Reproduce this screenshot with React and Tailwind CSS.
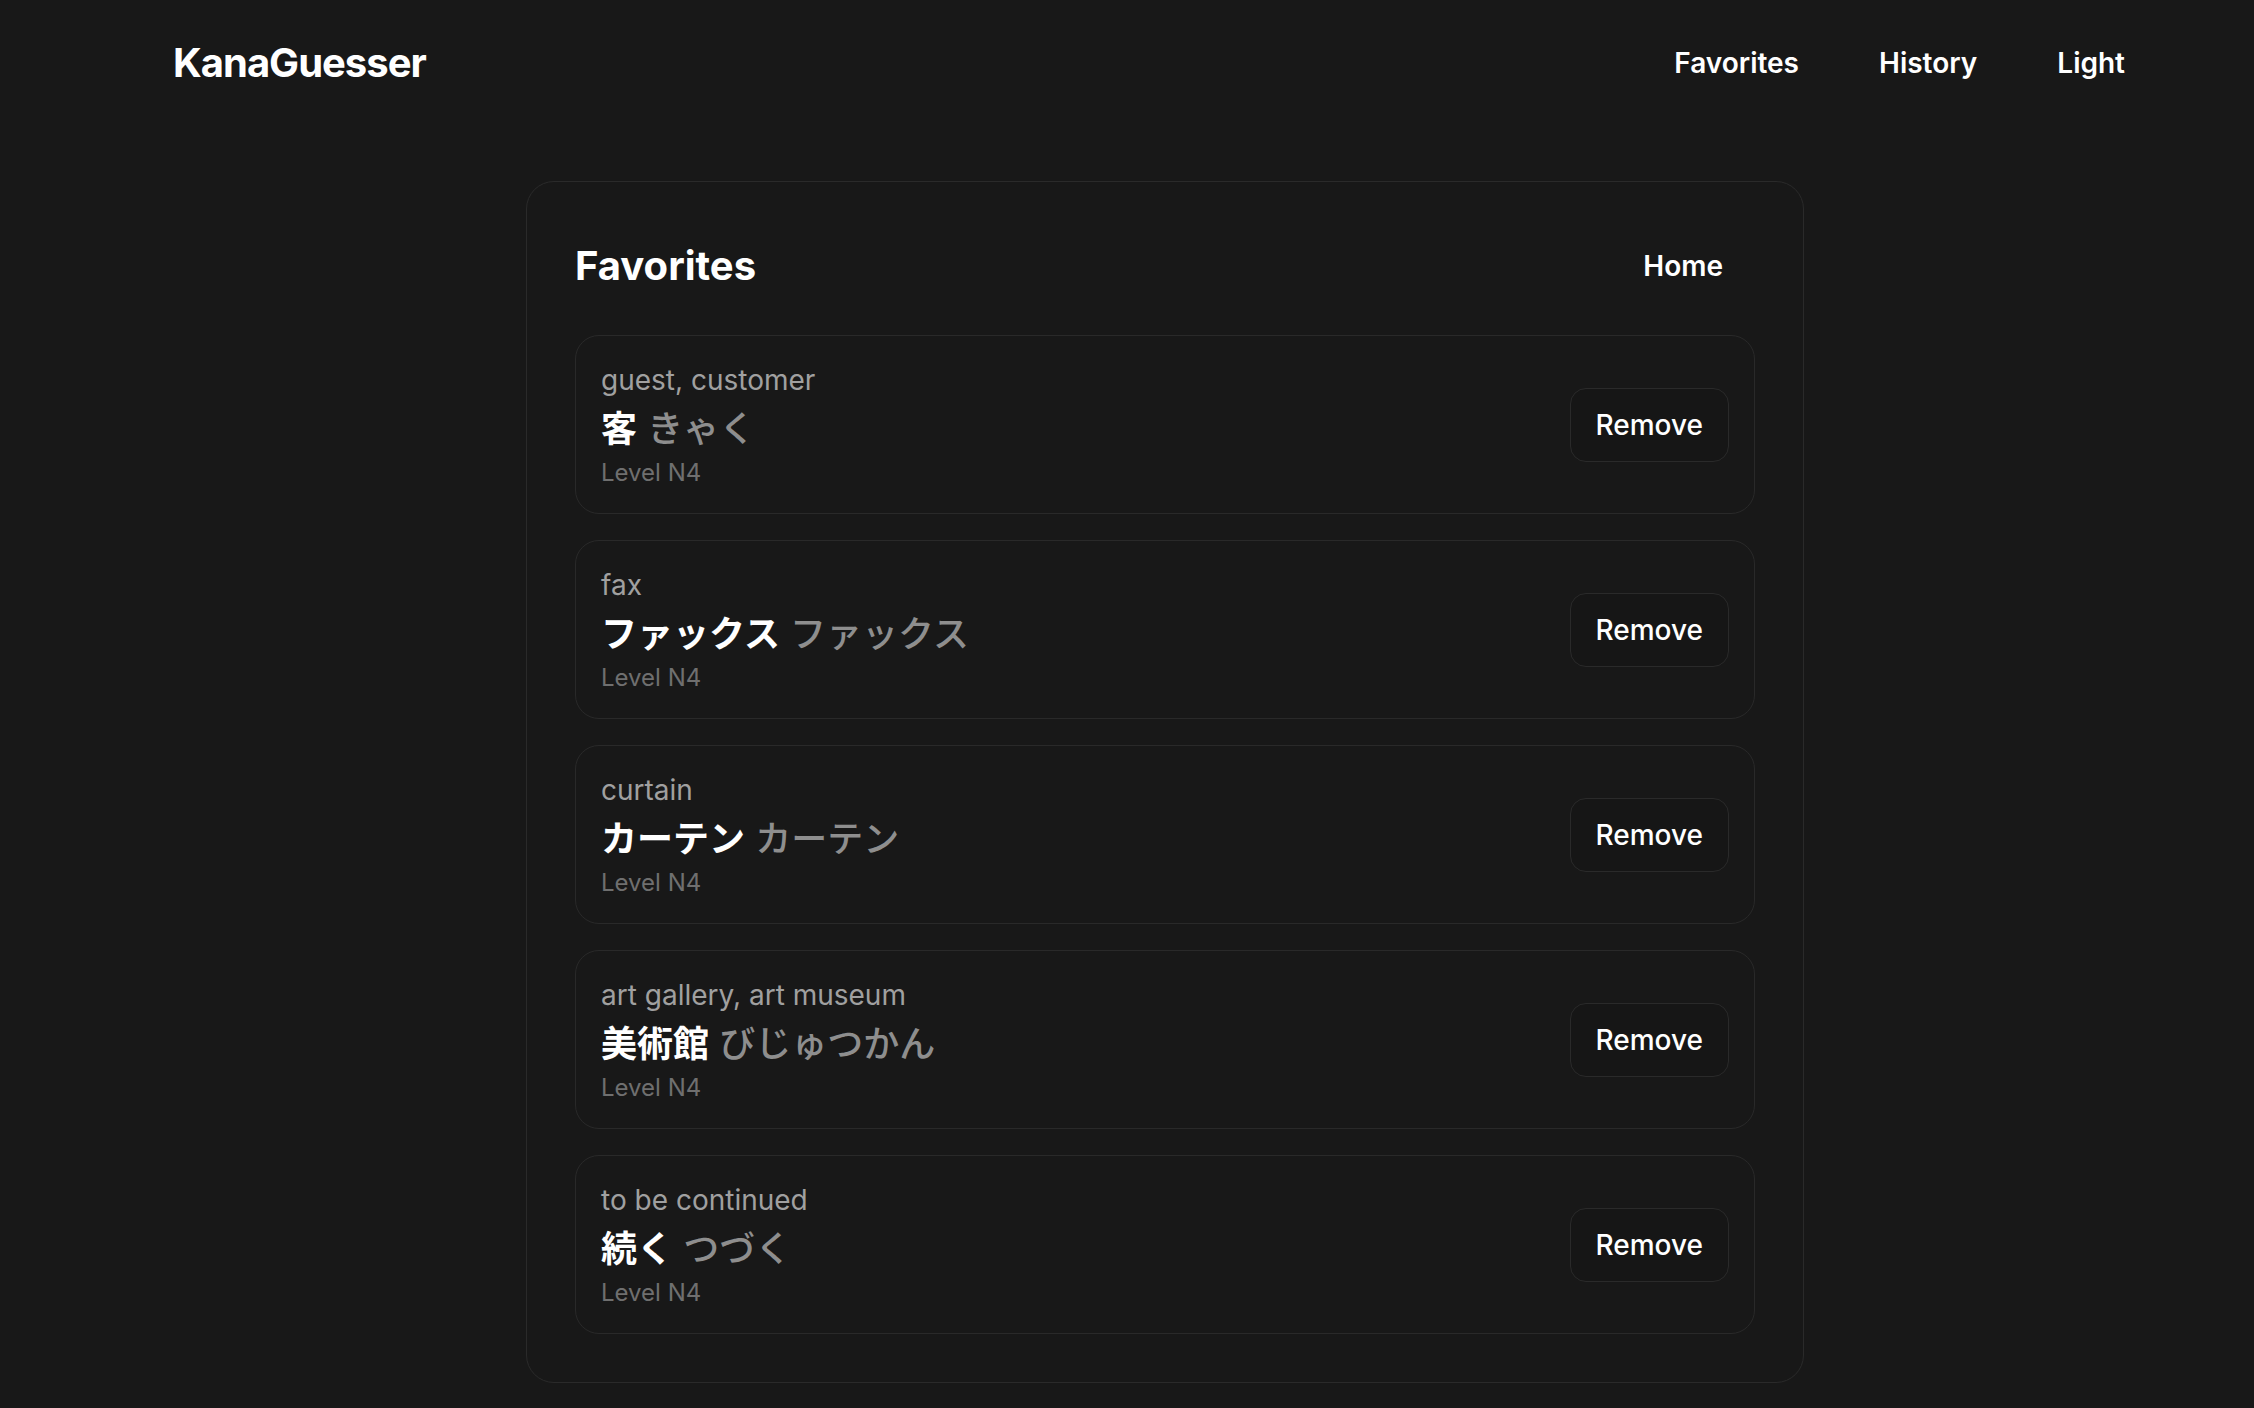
import { useState } from "react";

const favorites = [
  { meaning: "guest, customer", word: "客", reading: "きゃく", level: "N4" },
  { meaning: "fax", word: "ファックス", reading: "ファックス", level: "N4" },
  { meaning: "curtain", word: "カーテン", reading: "カーテン", level: "N4" },
  { meaning: "art gallery, art museum", word: "美術館", reading: "びじゅつかん", level: "N4" },
  { meaning: "to be continued", word: "続く", reading: "つづく", level: "N4" },
];

function FavoriteRow({ item, onRemove }) {
  return (
    <div className="flex h-[179px] items-center justify-between rounded-3xl border border-[#292929] px-[25px]">
      <div className="flex flex-col pt-[2px]">
        <span className="text-[28px] leading-[36px] text-[#a0a0a0]">{item.meaning}</span>
        <span className="mt-[7px] text-[36px] leading-[48px]">
          <span className="font-bold text-white">{item.word}</span>{" "}
          <span className="font-medium text-[#8e8e8e]">{item.reading}</span>
        </span>
        <span className="mt-[4px] text-[24px] leading-[32px] text-[#6f6f6f]">Level {item.level}</span>
      </div>
      <button
        onClick={onRemove}
        className="h-[74px] rounded-2xl border border-[#2a2a2a] bg-[#161616] px-[25px] text-[28px] font-medium text-white"
      >
        Remove
      </button>
    </div>
  );
}

export default function App() {
  const [items, setItems] = useState(favorites);

  return (
    <div className="min-h-screen bg-[#181818] pb-[25px] font-[Inter,'Noto_Sans_CJK_JP',sans-serif] text-white">
      <header className="flex h-[126px] items-center justify-between pl-[173px] pr-[129px]">
        <span className="text-[40px] font-bold tracking-tight">KanaGuesser</span>
        <nav className="flex items-center gap-[80px] text-[28px] font-semibold">
          <a>Favorites</a>
          <a>History</a>
          <a>Light</a>
        </nav>
      </header>

      <main className="mt-[55px] ml-[526px] w-[1278px] rounded-[28px] border border-[#2a2a2a] p-12">
        <div className="mb-[33px] flex h-[72px] items-center justify-between">
          <h1 className="text-[40px] leading-[48px] font-bold">Favorites</h1>
          <button className="h-[72px] rounded-2xl px-8 text-[28px] font-semibold">Home</button>
        </div>
        <div className="flex flex-col gap-[26px]">
          {items.map((item, index) => (
            <FavoriteRow
              key={`fav_${index}`}
              item={item}
              onRemove={() => setItems((s) => s.filter((_, i) => i !== index))}
            />
          ))}
        </div>
      </main>
    </div>
  );
}
